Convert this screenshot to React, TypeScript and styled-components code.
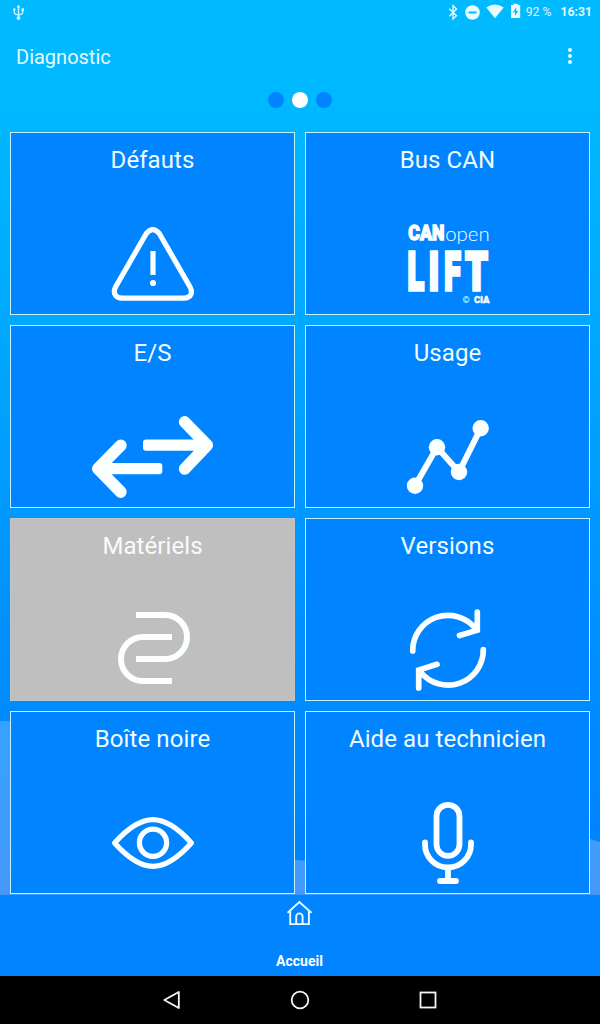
import React from "react";
import styled, { createGlobalStyle } from "styled-components";

const BLUE = "#0084ff";

const GlobalStyle = createGlobalStyle`
  *, *::before, *::after { box-sizing: border-box; }
  body { margin: 0; font-family: Roboto, "Liberation Sans", sans-serif; color: #fff; }
`;

const Screen = styled.div`
  position: relative;
  isolation: isolate;
  width: 600px;
  height: 1024px;
  overflow: hidden;
  display: flex;
  flex-direction: column;
  background: linear-gradient(180deg, #00baff 0, #00b8ff 110px, #00a9ff 320px, #0099ff 512px, #008aff 720px, #0080fa 895px);
`;

const Waves = styled.svg`
  position: absolute;
  left: 0;
  bottom: 129px;
  z-index: -1;
`;

const StatusBar = styled.div`
  height: 24px;
  flex: none;
  display: flex;
  align-items: center;
  justify-content: space-between;
  padding: 0 8px 0 12px;
`;

const StatusGroup = styled.div`
  display: flex;
  align-items: center;
`;

const StatusText = styled.span<{ $strong?: boolean }>`
  font-size: 12.3px;
  font-weight: ${(p) => (p.$strong ? 600 : 400)};
  line-height: 24px;
  white-space: nowrap;
  opacity: ${(p) => (p.$strong ? 0.95 : 0.88)};
  margin-left: ${(p) => (p.$strong ? "9px" : "0")};
`;

const AppBar = styled.header`
  height: 64px;
  flex: none;
  display: flex;
  align-items: center;
  justify-content: space-between;
  padding: 0 28px 0 16px;
`;

const PageTitle = styled.h1`
  margin: 0;
  padding-top: 2px;
  font-size: 20px;
  font-weight: 400;
  color: #e6faff;
`;

const MenuButton = styled.button`
  border: 0;
  padding: 0;
  background: none;
  display: flex;
  width: 4px;
  height: 16px;
`;

const Pager = styled.div`
  display: flex;
  flex: none;
  justify-content: center;
  gap: 8px;
  padding-top: 4px;
  height: 44px;
`;

const Dot = styled.span<{ $active?: boolean }>`
  width: 16px;
  height: 16px;
  border-radius: 50%;
  background: ${(p) => (p.$active ? "#fff" : BLUE)};
`;

const Grid = styled.main`
  display: grid;
  flex: none;
  grid-template-columns: 1fr 1fr;
  grid-auto-rows: 183px;
  gap: 10px;
  padding: 0 10px 1px;
`;

const Tile = styled.section<{ $disabled?: boolean }>`
  display: flex;
  flex-direction: column;
  align-items: center;
  justify-content: space-between;
  padding: 12px 0 4px;
  background: ${(p) => (p.$disabled ? "#bfbfbf" : BLUE)};
  border: 1px solid ${(p) => (p.$disabled ? "#bfc5c9" : "#c4f3ff")};
`;

const TileTitle = styled.h2<{ $disabled?: boolean }>`
  margin: 0;
  font-size: 24px;
  line-height: 30px;
  font-weight: 400;
  letter-spacing: 0.08px;
  white-space: nowrap;
  color: ${(p) => (p.$disabled ? "#fafafa" : "#f2fcff")};
`;

const TileIcon = styled.svg`
  display: block;
  width: 131px;
  height: 90px;
  fill: none;
  stroke: #fcffff;
`;

const Footer = styled.footer`
  height: 81px;
  flex: none;
  display: flex;
  flex-direction: column;
  align-items: center;
  justify-content: space-between;
  padding: 5px 1px 6px 0;
  background: ${BLUE};
`;

const FooterLabel = styled.span`
  font-size: 14px;
  font-weight: 700;
  line-height: 18px;
`;

const NavBar = styled.nav`
  flex: 1;
  display: flex;
  align-items: center;
  justify-content: center;
  gap: 104px;
  background: #000;
`;

const NavIcon = styled.svg`
  width: 24px;
  height: 24px;
  fill: none;
  stroke: #f5f5f5;
  stroke-width: 1.8;
`;

const WarningIcon = () => (
  <TileIcon viewBox="0 0 131 90" strokeWidth="5.2">
    <path d="M59.3 13.5Q65.8 5.8 72.3 13.5L102.8 66.5C106.5 73 103.5 78.2 97 78.2H35C28.5 78.2 25.3 73 28.8 66.5Z" strokeLinejoin="round" />
    <path d="M66 31V55" />
    <circle cx="66" cy="63" r="3.1" fill="#fcffff" stroke="none" />
  </TileIcon>
);

const CanOpenLogo = () => (
  <TileIcon viewBox="0 0 131 90">
    <g fill="#fcffff" stroke="none" fontFamily="Roboto, sans-serif">
      <text x="26.3" y="20.4" fontSize="20" fontWeight="900" textLength="36" lengthAdjust="spacingAndGlyphs" stroke="#fcffff" strokeWidth="1.3">CAN</text>
      <text x="63.2" y="20.8" fontSize="19.5" fontWeight="300" fontFamily="Lato, sans-serif" textLength="44.5" lengthAdjust="spacingAndGlyphs">open</text>
      <g fontSize="54" fontWeight="900" stroke="#fcffff" strokeWidth="3.6">
        <text x="25.5" y="70.3" textLength="16.5" lengthAdjust="spacingAndGlyphs">L</text>
        <text x="46.7" y="70.3" textLength="10.3" lengthAdjust="spacingAndGlyphs">I</text>
        <text x="62.2" y="70.3" textLength="16.5" lengthAdjust="spacingAndGlyphs">F</text>
        <text x="83.3" y="70.3" textLength="22.5" lengthAdjust="spacingAndGlyphs">T</text>
      </g>
      <text x="80.5" y="83" fontSize="9">©</text>
      <text x="92" y="82.8" fontSize="9.5" fontWeight="900" textLength="15.5" lengthAdjust="spacingAndGlyphs" stroke="#fcffff" strokeWidth="0.4">CiA</text>
    </g>
  </TileIcon>
);

const ArrowsIcon = () => (
  <TileIcon viewBox="0 0 131 90" strokeWidth="11.8" strokeLinecap="round" strokeLinejoin="round">
    <path d="M97.7 9L120.2 32.2L97.7 55.9" />
    <path d="M33.8 32.3L10.9 55.7L33.8 79" />
    <g fill="#fcffff" stroke="none">
      <rect x="56" y="26.5" width="64" height="11.2" rx="3" />
      <rect x="11" y="50" width="64.3" height="11.2" rx="3" />
    </g>
  </TileIcon>
);

const TrendIcon = () => (
  <TileIcon viewBox="0 0 131 90" strokeWidth="6">
    <path d="M33 72.7L55 34.3L77 59L98.7 15.3" />
    <g fill="#fcffff" stroke="none">
      <circle cx="33" cy="72.7" r="8.2" />
      <circle cx="55" cy="34.3" r="8.2" />
      <circle cx="77" cy="59" r="8.2" />
      <circle cx="98.7" cy="15.3" r="8.2" />
    </g>
  </TileIcon>
);

const HardwareIcon = () => (
  <TileIcon viewBox="0 0 131 90" strokeWidth="6">
    <path d="M49 9H78A22 22 0 0 1 78 53H49M85 31H56A22 22 0 0 0 56 75H85" />
  </TileIcon>
);

const RefreshIcon = () => (
  <TileIcon viewBox="0 0 131 90" strokeWidth="5.7" strokeLinecap="round" strokeLinejoin="miter">
    <path d="M30.7 45A35.3 35.3 0 0 1 93.5 22.5M95.3 6V24.2L77.5 29.5" />
    <path d="M101.3 43.5A35.3 35.3 0 0 1 38.5 66M36.7 82V64L55 58.3" />
  </TileIcon>
);

const EyeIcon = () => (
  <TileIcon viewBox="0 0 131 90" strokeWidth="5.3" strokeLinejoin="round">
    <path d="M27.6 44C41.5 28.5 53.5 20.7 66 20.7S90.5 28.5 104.4 44C90.5 59.5 78.5 67.3 66 67.3S41.5 59.5 27.6 44Z" />
    <circle cx="66" cy="43.8" r="13.6" />
  </TileIcon>
);

const MicIcon = () => (
  <TileIcon viewBox="0 0 131 90" strokeWidth="5.8" strokeLinecap="round">
    <rect x="54.5" y="5.8" width="23" height="51" rx="11.5" />
    <path d="M43 43.5V45.5A23 23 0 0 0 89 45.5V43.5M66 68.5V82M58 82H74" />
  </TileIcon>
);

const tiles = [
  { title: "Défauts", Icon: WarningIcon },
  { title: "Bus CAN", Icon: CanOpenLogo },
  { title: "E/S", Icon: ArrowsIcon },
  { title: "Usage", Icon: TrendIcon },
  { title: "Matériels", Icon: HardwareIcon, disabled: true },
  { title: "Versions", Icon: RefreshIcon },
  { title: "Boîte noire", Icon: EyeIcon },
  { title: "Aide au technicien", Icon: MicIcon },
];

const UsbIcon = () => (
  <svg width="13" height="18" viewBox="0 0 13 18" fill="none" stroke="#c9f5ff" strokeWidth="1.4">
    <path d="M6.5 3V15M2.3 7V9.2Q2.3 11.5 6.5 11.8Q10.7 11.5 10.7 9.2V7" />
    <path d="M4.5 4.6L6.5 1.8L8.5 4.6Z" fill="#c9f5ff" stroke="none" />
    <circle cx="6.5" cy="15" r="1.9" fill="#c9f5ff" stroke="none" />
    <circle cx="2.3" cy="6.6" r="1.3" fill="#c9f5ff" stroke="none" />
    <path d="M9.4 5.3H12V7.9H9.4Z" fill="#c9f5ff" stroke="none" />
  </svg>
);

const StatusIcons = () => (
  <svg width="78" height="24" viewBox="447 0 78 24" fill="#e9fbff">
    <path d="M448.3 8.7L455.5 15.8L452 19V5.6L455.5 8.9L448.3 16.2" fill="none" stroke="#e0f9ff" strokeWidth="1.4" />
    <path fillRule="evenodd" d="M471.5 5.2A7.3 7.3 0 1 1 471.5 19.8A7.3 7.3 0 1 1 471.5 5.2ZM467.5 11.6V13.4H475.5V11.6Z" />
    <path d="M485.3 7.5Q494 1.5 502.7 7.5L494 18.3Z" />
    <path fillRule="evenodd" d="M510 5H512.3V3.7H516.7V5H519.2V18H510ZM515.2 7.2L512 12.3H514V16L517.1 10.9H515.2Z" />
  </svg>
);

const HomeIcon = () => (
  <svg width="26" height="26" viewBox="0.7 0 26 26" fill="none" stroke="#e8fbff" strokeWidth="1.9">
    <path d="M1.9 12.3L13 2L24.6 12.3" strokeLinecap="round" />
    <path d="M3.9 10.5V24.1H22.6V10.5" />
    <path d="M9.9 24V16.6A3.2 3.2 0 0 1 16.3 16.6V24" />
  </svg>
);

export default function App() {
  return (
    <Screen>
      <GlobalStyle />
      <Waves width="600" height="181" viewBox="0 0 600 181">
        <defs>
          <linearGradient id="wave" x1="0" y1="0" x2="0" y2="1">
            <stop offset="0" stopColor="#38a2ff" />
            <stop offset="1" stopColor="#4599f9" />
          </linearGradient>
        </defs>
        <path fill="url(#wave)" d="M0 7Q60 5 130 55C190 100 230 144 295 146Q320 148 350 142C430 125 500 95 600 128V181H0Z" />
      </Waves>
      <StatusBar>
        <UsbIcon />
        <StatusGroup>
          <StatusIcons />
          <StatusText>92 %</StatusText>
          <StatusText $strong>16:31</StatusText>
        </StatusGroup>
      </StatusBar>
      <AppBar>
        <PageTitle>Diagnostic</PageTitle>
        <MenuButton aria-label="Menu">
          <svg width="4" height="16" viewBox="0 0 4 16" fill="#f0fcff">
            <circle cx="2" cy="2" r="2" />
            <circle cx="2" cy="8" r="2" />
            <circle cx="2" cy="14" r="2" />
          </svg>
        </MenuButton>
      </AppBar>
      <Pager>
        <Dot />
        <Dot $active />
        <Dot />
      </Pager>
      <Grid>
        {tiles.map(({ title, Icon, disabled }) => (
          <Tile key={title} $disabled={disabled}>
            <TileTitle $disabled={disabled}>{title}</TileTitle>
            <Icon />
          </Tile>
        ))}
      </Grid>
      <Footer>
        <HomeIcon />
        <FooterLabel>Accueil</FooterLabel>
      </Footer>
      <NavBar>
        <NavIcon viewBox="0 0 24 24">
          <path d="M18.8 4V20L4.3 12Z" strokeLinejoin="round" />
        </NavIcon>
        <NavIcon viewBox="0 0 24 24">
          <circle cx="12" cy="12" r="8.3" />
        </NavIcon>
        <NavIcon viewBox="0 0 24 24">
          <rect x="4.5" y="4.5" width="15" height="15" />
        </NavIcon>
      </NavBar>
    </Screen>
  );
}
